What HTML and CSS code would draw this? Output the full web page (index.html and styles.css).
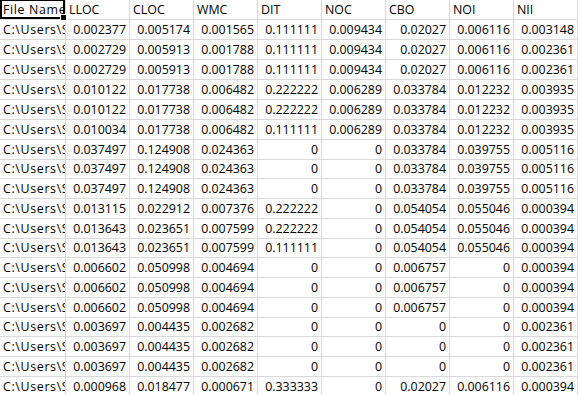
FILE: index.html
```html
<!DOCTYPE html>
<html>
<head>
<meta charset="utf-8">
<link rel="stylesheet" href="styles.css">
</head>
<body>
<div class="sheet">
  <div class="cell txt sel"><span class="clip path">File Name</span><span class="handle"></span></div>
  <div class="cell txt">LLOC</div><div class="cell txt">CLOC</div><div class="cell txt">WMC</div><div class="cell txt">DIT</div><div class="cell txt">NOC</div><div class="cell txt">CBO</div><div class="cell txt">NOI</div><div class="cell txt">NII</div>

  <div class="cell txt"><span class="clip path">C:\Users\Student</span></div><div class="cell num">0.002377</div><div class="cell num">0.005174</div><div class="cell num">0.001565</div><div class="cell num">0.111111</div><div class="cell num">0.009434</div><div class="cell num">0.02027</div><div class="cell num">0.006116</div><div class="cell num">0.003148</div>
  <div class="cell txt"><span class="clip path">C:\Users\Student</span></div><div class="cell num">0.002729</div><div class="cell num">0.005913</div><div class="cell num">0.001788</div><div class="cell num">0.111111</div><div class="cell num">0.009434</div><div class="cell num">0.02027</div><div class="cell num">0.006116</div><div class="cell num">0.002361</div>
  <div class="cell txt"><span class="clip path">C:\Users\Student</span></div><div class="cell num">0.002729</div><div class="cell num">0.005913</div><div class="cell num">0.001788</div><div class="cell num">0.111111</div><div class="cell num">0.009434</div><div class="cell num">0.02027</div><div class="cell num">0.006116</div><div class="cell num">0.002361</div>
  <div class="cell txt"><span class="clip path">C:\Users\Student</span></div><div class="cell num">0.010122</div><div class="cell num">0.017738</div><div class="cell num">0.006482</div><div class="cell num">0.222222</div><div class="cell num">0.006289</div><div class="cell num">0.033784</div><div class="cell num">0.012232</div><div class="cell num">0.003935</div>
  <div class="cell txt"><span class="clip path">C:\Users\Student</span></div><div class="cell num">0.010122</div><div class="cell num">0.017738</div><div class="cell num">0.006482</div><div class="cell num">0.222222</div><div class="cell num">0.006289</div><div class="cell num">0.033784</div><div class="cell num">0.012232</div><div class="cell num">0.003935</div>
  <div class="cell txt"><span class="clip path">C:\Users\Student</span></div><div class="cell num">0.010034</div><div class="cell num">0.017738</div><div class="cell num">0.006482</div><div class="cell num">0.111111</div><div class="cell num">0.006289</div><div class="cell num">0.033784</div><div class="cell num">0.012232</div><div class="cell num">0.003935</div>
  <div class="cell txt"><span class="clip path">C:\Users\Student</span></div><div class="cell num">0.037497</div><div class="cell num">0.124908</div><div class="cell num">0.024363</div><div class="cell num">0</div><div class="cell num">0</div><div class="cell num">0.033784</div><div class="cell num">0.039755</div><div class="cell num">0.005116</div>
  <div class="cell txt"><span class="clip path">C:\Users\Student</span></div><div class="cell num">0.037497</div><div class="cell num">0.124908</div><div class="cell num">0.024363</div><div class="cell num">0</div><div class="cell num">0</div><div class="cell num">0.033784</div><div class="cell num">0.039755</div><div class="cell num">0.005116</div>
  <div class="cell txt"><span class="clip path">C:\Users\Student</span></div><div class="cell num">0.037497</div><div class="cell num">0.124908</div><div class="cell num">0.024363</div><div class="cell num">0</div><div class="cell num">0</div><div class="cell num">0.033784</div><div class="cell num">0.039755</div><div class="cell num">0.005116</div>
  <div class="cell txt"><span class="clip path">C:\Users\Student</span></div><div class="cell num">0.013115</div><div class="cell num">0.022912</div><div class="cell num">0.007376</div><div class="cell num">0.222222</div><div class="cell num">0</div><div class="cell num">0.054054</div><div class="cell num">0.055046</div><div class="cell num">0.000394</div>
  <div class="cell txt"><span class="clip path">C:\Users\Student</span></div><div class="cell num">0.013643</div><div class="cell num">0.023651</div><div class="cell num">0.007599</div><div class="cell num">0.222222</div><div class="cell num">0</div><div class="cell num">0.054054</div><div class="cell num">0.055046</div><div class="cell num">0.000394</div>
  <div class="cell txt"><span class="clip path">C:\Users\Student</span></div><div class="cell num">0.013643</div><div class="cell num">0.023651</div><div class="cell num">0.007599</div><div class="cell num">0.111111</div><div class="cell num">0</div><div class="cell num">0.054054</div><div class="cell num">0.055046</div><div class="cell num">0.000394</div>
  <div class="cell txt"><span class="clip path">C:\Users\Student</span></div><div class="cell num">0.006602</div><div class="cell num">0.050998</div><div class="cell num">0.004694</div><div class="cell num">0</div><div class="cell num">0</div><div class="cell num">0.006757</div><div class="cell num">0</div><div class="cell num">0.000394</div>
  <div class="cell txt"><span class="clip path">C:\Users\Student</span></div><div class="cell num">0.006602</div><div class="cell num">0.050998</div><div class="cell num">0.004694</div><div class="cell num">0</div><div class="cell num">0</div><div class="cell num">0.006757</div><div class="cell num">0</div><div class="cell num">0.000394</div>
  <div class="cell txt"><span class="clip path">C:\Users\Student</span></div><div class="cell num">0.006602</div><div class="cell num">0.050998</div><div class="cell num">0.004694</div><div class="cell num">0</div><div class="cell num">0</div><div class="cell num">0.006757</div><div class="cell num">0</div><div class="cell num">0.000394</div>
  <div class="cell txt"><span class="clip path">C:\Users\Student</span></div><div class="cell num">0.003697</div><div class="cell num">0.004435</div><div class="cell num">0.002682</div><div class="cell num">0</div><div class="cell num">0</div><div class="cell num">0</div><div class="cell num">0</div><div class="cell num">0.002361</div>
  <div class="cell txt"><span class="clip path">C:\Users\Student</span></div><div class="cell num">0.003697</div><div class="cell num">0.004435</div><div class="cell num">0.002682</div><div class="cell num">0</div><div class="cell num">0</div><div class="cell num">0</div><div class="cell num">0</div><div class="cell num">0.002361</div>
  <div class="cell txt"><span class="clip path">C:\Users\Student</span></div><div class="cell num">0.003697</div><div class="cell num">0.004435</div><div class="cell num">0.002682</div><div class="cell num">0</div><div class="cell num">0</div><div class="cell num">0</div><div class="cell num">0</div><div class="cell num">0.002361</div>
  <div class="cell txt"><span class="clip path">C:\Users\Student</span></div><div class="cell num">0.000968</div><div class="cell num">0.018477</div><div class="cell num">0.000671</div><div class="cell num">0.333333</div><div class="cell num">0</div><div class="cell num">0.02027</div><div class="cell num">0.006116</div><div class="cell num">0.000394</div>
</div>
</body>
</html>
```
FILE: styles.css
```css
html, body {
  margin: 0;
  padding: 0;
  background: #ffffff;
  overflow: hidden;
}
.sheet {
  display: grid;
  grid-template-columns: 66px repeat(8, 64px);
  grid-template-rows: repeat(8, 20px) 19px repeat(3, 20px) 19px repeat(3, 20px) 19px repeat(3, 20px);
  font-family: "Open Sans", "Liberation Sans", sans-serif;
  font-size: 12.4px;
  color: #000;
  width: 578px;
}
.cell {
  border-right: 1px solid #d9d9d9;
  border-bottom: 1px solid #d9d9d9;
  overflow: hidden;
  white-space: nowrap;
  display: flex;
  align-items: flex-end;
  padding: 0 3px 1px 3px;
  line-height: 17px;
  position: relative;
}
.num { justify-content: flex-end; }
.txt { justify-content: flex-start; }
.clip {
  display: block;
  flex: 1 1 auto;
  min-width: 0;
  overflow: hidden;
  margin-right: -3px;
}
.path { letter-spacing: 0.65px; }
.sel { overflow: visible; }
.sel::before {
  content: "";
  position: absolute;
  left: 0; top: -1px; right: 0; bottom: 0;
  border: 2px solid #000;
  pointer-events: none;
}
.handle {
  position: absolute;
  right: -2px;
  bottom: -2px;
  width: 5px;
  height: 5px;
  background: #000;
  border: 1px solid #fff;
  z-index: 2;
}
```
